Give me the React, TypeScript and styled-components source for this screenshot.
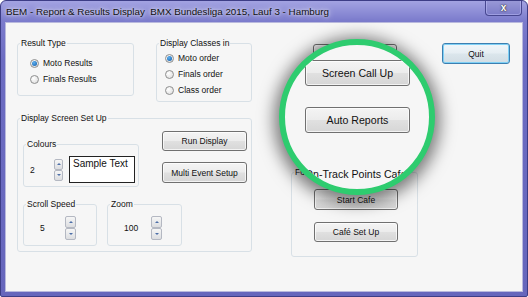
import styled, { createGlobalStyle } from 'styled-components';

const GlobalStyle = createGlobalStyle`
    html, body {
        margin: 0;
        padding: 0;
        background: #ffffff;
    }
    body {
        font-family: 'Liberation Sans', Arial, sans-serif;
    }
`;

const Window = styled.div`
    position: relative;
    width: 528px;
    height: 297px;
    box-sizing: border-box;
    border: 1px solid #3d3d86;
    border-radius: 6px 6px 2px 2px;
    background: linear-gradient(180deg, #a3a3e2 0, #7b7bcc 20px, #6c6cc2 60px, #6666bc 100%);
    display: flex;
    flex-direction: column;
    overflow: hidden;
`;

const TitleBar = styled.div`
    height: 22px;
    display: flex;
    align-items: flex-start;
    justify-content: space-between;
    padding-left: 5px;
`;

const Title = styled.span`
    margin-top: 5px;
    font-size: 9.8px;
    line-height: 12px;
    color: #111;
    white-space: pre;
    text-shadow: 0 0 6px rgba(255, 255, 255, 0.9), 0 0 3px rgba(255, 255, 255, 0.7);
`;

const CloseButton = styled.div`
    width: 37px;
    height: 16px;
    margin: -1px 5px 0 0;
    box-sizing: border-box;
    border: 1px solid #474790;
    border-top: none;
    border-radius: 0 0 4px 4px;
    box-shadow: inset 0 0 0 1px rgba(200, 200, 255, 0.45);
    background: linear-gradient(180deg, #9a9ad8, #7c7cc8);
    display: flex;
    align-items: center;
    justify-content: center;
    color: #fff;
    font-weight: bold;
    font-size: 10px;
    text-shadow: 0 0 1px #222, 0 0 2px #333;
`;

const Content = styled.div`
    flex: 1;
    margin: 0 5px 5px 5px;
    background: #f6f6f6;
    box-shadow: 0 0 0 1px #b9b9dd;
    display: flex;
    align-items: flex-start;
    padding: 15px 0 0 11px;
    color: #111;
    font-size: 8.5px;
`;

const LeftCol = styled.div`
    width: 235px;
    display: flex;
    flex-direction: column;
`;

const TopRow = styled.div`
    display: flex;
    justify-content: space-between;
    align-items: flex-start;
`;

const GroupBox = styled.fieldset<{ $w: number; $h: number }>`
    margin: 0;
    padding: 0;
    min-width: 0;
    width: ${(p) => p.$w}px;
    height: ${(p) => p.$h}px;
    box-sizing: border-box;
    border: 1px solid #d8e0e6;
    border-radius: 3px;
`;

const Legend = styled.legend`
    padding: 0 1px;
    margin-left: 2px;
    font-size: 8.5px;
    line-height: 10px;
    white-space: nowrap;
`;

const RadioList = styled.div<{ $top: number; $left: number }>`
    display: flex;
    flex-direction: column;
    padding: ${(p) => p.$top}px 0 0 ${(p) => p.$left}px;
`;

const RadioRow = styled.label`
    height: 16px;
    display: flex;
    align-items: center;
    gap: 4px;
    white-space: nowrap;
`;

const Radio = styled.span<{ $checked?: boolean }>`
    width: 9px;
    height: 9px;
    box-sizing: border-box;
    border-radius: 50%;
    border: 1px solid #8e8f8f;
    background: radial-gradient(circle at 35% 35%, #ffffff, #d9d9d9);
    display: flex;
    align-items: center;
    justify-content: center;

    &::after {
        content: '';
        display: ${(p) => (p.$checked ? 'block' : 'none')};
        width: 5px;
        height: 5px;
        border-radius: 50%;
        background: radial-gradient(circle at 40% 35%, #5fb2f0, #0b57a8);
    }
`;

const ScreenSetUp = styled(GroupBox)`
    margin-top: 11px;
`;

const SetUpGrid = styled.div`
    display: grid;
    grid-template-columns: 116px 85px;
    column-gap: 23px;
    row-gap: 12px;
    align-items: start;
    padding: 8px 0 0 5px;
`;

const ColoursBox = styled(GroupBox)`
    margin-top: 8px;
`;

const SpinRow = styled.div`
    grid-column: 1 / span 2;
    display: flex;
    gap: 10px;
`;

const ButtonStack = styled.div<{ $gap: number; $top: number }>`
    display: flex;
    flex-direction: column;
    gap: ${(p) => p.$gap}px;
    margin-top: ${(p) => p.$top}px;
`;

const Button = styled.button<{ $w?: number; $h?: number; $covered?: boolean }>`
    width: ${(p) => p.$w ?? 84}px;
    height: ${(p) => p.$h ?? 21}px;
    padding: 0;
    box-sizing: border-box;
    border: 1px solid #707070;
    border-radius: 3px;
    background: linear-gradient(180deg, #f4f4f4 0%, #ececec 48%, #e0e0e0 52%, #d6d6d6 100%);
    box-shadow: inset 0 0 0 1px rgba(255, 255, 255, 0.7);
    font-family: 'Liberation Sans', Arial, sans-serif;
    font-size: 8.5px;
    color: #111;
    visibility: ${(p) => (p.$covered ? 'hidden' : 'visible')};
`;

const QuitButton = styled(Button)`
    border-color: #3c7fb1;
    box-shadow: inset 0 0 0 1px #7fd0f5;
    background: linear-gradient(180deg, #f0f6fa 0%, #e6eef3 48%, #dbe6ec 52%, #d2dde4 100%);
`;

const ColourRow = styled.div`
    display: flex;
    align-items: center;
    padding: 7px 0 0 6px;
`;

const Value = styled.span<{ $w: number }>`
    width: ${(p) => p.$w}px;
    font-size: 8.5px;
`;

const Spin = styled.div<{ $w: number; $h: number }>`
    width: ${(p) => p.$w}px;
    height: ${(p) => p.$h * 2}px;
    display: flex;
    flex-direction: column;
`;

const SpinHalf = styled.div<{ $down?: boolean }>`
    flex: 1;
    box-sizing: border-box;
    border: 1px solid #b4b8c2;
    border-radius: 2px;
    background: linear-gradient(180deg, #f6f6f6, #dcdde0);
    display: flex;
    align-items: center;
    justify-content: center;

    &::after {
        content: '';
        width: 0;
        height: 0;
        border-left: 2px solid transparent;
        border-right: 2px solid transparent;
        ${(p) =>
            p.$down
                ? 'border-top: 2px solid #4d6fa8;'
                : 'border-bottom: 2px solid #4d6fa8;'}
    }
`;

const SampleBox = styled.div`
    margin-left: 6px;
    width: 66px;
    height: 27px;
    box-sizing: border-box;
    border: 1px solid #222;
    background: #fff;
    padding: 1px 0 0 3px;
    font-size: 10px;
    line-height: 11px;
`;

const ValueRow = styled.div`
    display: flex;
    align-items: center;
    padding: 7px 0 0 16px;
`;

const RightCol = styled.div`
    margin-left: 39px;
    width: 127px;
    display: flex;
    flex-direction: column;
    padding-top: 6px;
`;

const ActionStack = styled.div`
    display: flex;
    flex-direction: column;
    gap: 12px;
    padding-left: 22px;
`;

const CafeGroup = styled(GroupBox)`
    margin-top: 36px;
`;

const QuitCol = styled.div`
    margin-left: 24px;
    padding-top: 5px;
`;

const Magnifier = styled.div`
    position: absolute;
    left: 278px;
    top: 38px;
    width: 156px;
    height: 156px;
    box-sizing: border-box;
    border-radius: 50%;
    border: 6px solid #2ecc6f;
    background: #f6f6f6;
    box-shadow: 0 3px 16px 5px rgba(0, 0, 0, 0.5);
    overflow: hidden;
    display: flex;
    flex-direction: column;
    gap: 21px;
    padding: 15px 0 0 20px;
    color: #111;
`;

const BigButton = styled(Button)`
    width: 105px;
    height: 26px;
    font-size: 10.6px;
    border-radius: 3px;
`;

const BigLabel = styled.div`
    margin: 13px 0 0 -19px;
    font-size: 10.6px;
    line-height: 14px;
    white-space: nowrap;
`;

export default function App() {
    return (
        <>
            <GlobalStyle />
            <Window>
                <TitleBar>
                    <Title>BEM - Report &amp; Results Display  BMX Bundesliga 2015, Lauf 3 - Hamburg</Title>
                    <CloseButton>x</CloseButton>
                </TitleBar>
                <Content>
                    <LeftCol>
                        <TopRow>
                            <GroupBox $w={117} $h={58}>
                                <Legend>Result Type</Legend>
                                <RadioList $top={7} $left={12}>
                                    <RadioRow>
                                        <Radio $checked />
                                        Moto Results
                                    </RadioRow>
                                    <RadioRow>
                                        <Radio />
                                        Finals Results
                                    </RadioRow>
                                </RadioList>
                            </GroupBox>
                            <GroupBox $w={96} $h={64}>
                                <Legend>Display Classes in</Legend>
                                <RadioList $top={2} $left={8}>
                                    <RadioRow>
                                        <Radio $checked />
                                        Moto order
                                    </RadioRow>
                                    <RadioRow>
                                        <Radio />
                                        Finals order
                                    </RadioRow>
                                    <RadioRow>
                                        <Radio />
                                        Class order
                                    </RadioRow>
                                </RadioList>
                            </GroupBox>
                        </TopRow>
                        <ScreenSetUp $w={235} $h={139}>
                            <Legend>Display Screen Set Up</Legend>
                            <SetUpGrid>
                                <ColoursBox $w={116} $h={48}>
                                    <Legend>Colours</Legend>
                                    <ColourRow>
                                        <Value $w={24}>2</Value>
                                        <Spin $w={9} $h={11}>
                                            <SpinHalf />
                                            <SpinHalf $down />
                                        </Spin>
                                        <SampleBox>Sample Text</SampleBox>
                                    </ColourRow>
                                </ColoursBox>
                                <ButtonStack $gap={11} $top={0}>
                                    <Button $w={85} $h={20}>Run Display</Button>
                                    <Button $w={85} $h={21}>Multi Event Setup</Button>
                                </ButtonStack>
                                <SpinRow>
                                    <GroupBox $w={74} $h={47}>
                                        <Legend>Scroll Speed</Legend>
                                        <ValueRow>
                                            <Value $w={25}>5</Value>
                                            <Spin $w={11} $h={12}>
                                                <SpinHalf />
                                                <SpinHalf $down />
                                            </Spin>
                                        </ValueRow>
                                    </GroupBox>
                                    <GroupBox $w={75} $h={47}>
                                        <Legend>Zoom</Legend>
                                        <ValueRow>
                                            <Value $w={27}>100</Value>
                                            <Spin $w={11} $h={12}>
                                                <SpinHalf />
                                                <SpinHalf $down />
                                            </Spin>
                                        </ValueRow>
                                    </GroupBox>
                                </SpinRow>
                            </SetUpGrid>
                        </ScreenSetUp>
                    </LeftCol>
                    <RightCol>
                        <ActionStack>
                            <Button>Report Set Up</Button>
                            <Button $covered>Screen Call Up</Button>
                            <Button $covered>Auto Reports</Button>
                        </ActionStack>
                        <CafeGroup $w={127} $h={90}>
                            <Legend>For On-Track Points Cafe</Legend>
                            <ButtonStack $gap={12} $top={12}>
                                <ActionStack>
                                    <Button>Start Cafe</Button>
                                    <Button $h={20}>Café Set Up</Button>
                                </ActionStack>
                            </ButtonStack>
                        </CafeGroup>
                    </RightCol>
                    <QuitCol>
                        <QuitButton $w={68}>Quit</QuitButton>
                    </QuitCol>
                </Content>
                <Magnifier>
                    <BigButton>Screen Call Up</BigButton>
                    <BigButton>Auto Reports</BigButton>
                    <BigLabel>For On-Track Points Cafe</BigLabel>
                </Magnifier>
            </Window>
        </>
    );
}
